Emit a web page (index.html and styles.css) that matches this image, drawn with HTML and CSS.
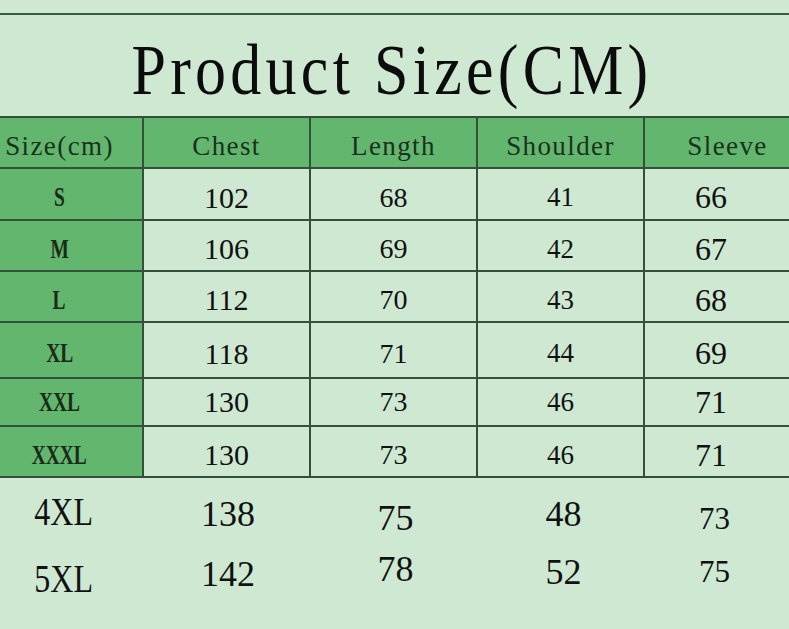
FILE: index.html
```html
<!DOCTYPE html>
<html lang="en">
<head>
<meta charset="utf-8">
<title>Product Size (CM)</title>
<link rel="stylesheet" href="styles.css">
</head>
<body>
<div class="page">
  <div class="topline"></div>
  <div class="title-wrap"><h1 class="title">Product Size(CM)</h1></div>
  <div class="grid">
    <div class="c h k"><span class="hl">Size(cm)</span></div>
    <div class="c h"><span class="hl">Chest</span></div>
    <div class="c h"><span class="hl">Length</span></div>
    <div class="c h"><span class="hl">Shoulder</span></div>
    <div class="c h"><span class="hl">Sleeve</span></div>

    <div class="c k"><span class="lab">S</span></div>
    <div class="c d chest">102</div>
    <div class="c d len">68</div>
    <div class="c d sh">41</div>
    <div class="c d sl">66</div>

    <div class="c k"><span class="lab">M</span></div>
    <div class="c d chest">106</div>
    <div class="c d len">69</div>
    <div class="c d sh">42</div>
    <div class="c d sl">67</div>

    <div class="c k"><span class="lab">L</span></div>
    <div class="c d chest">112</div>
    <div class="c d len">70</div>
    <div class="c d sh">43</div>
    <div class="c d sl">68</div>

    <div class="c k"><span class="lab">XL</span></div>
    <div class="c d chest">118</div>
    <div class="c d len">71</div>
    <div class="c d sh">44</div>
    <div class="c d sl">69</div>

    <div class="c k flat"><span class="lab">XXL</span></div>
    <div class="c d chest flat">130</div>
    <div class="c d len flat">73</div>
    <div class="c d sh flat">46</div>
    <div class="c d sl flat">71</div>

    <div class="c k"><span class="lab">XXXL</span></div>
    <div class="c d chest">130</div>
    <div class="c d len">73</div>
    <div class="c d sh">46</div>
    <div class="c d sl">71</div>

    <div class="f key u3"><span class="big">4XL</span></div>
    <div class="f chest-b">138</div>
    <div class="f len-b d4">75</div>
    <div class="f sh-b">48</div>
    <div class="f sl-b d5">73</div>

    <div class="f key d6"><span class="big">5XL</span></div>
    <div class="f chest-b d1">142</div>
    <div class="f len-b u3">78</div>
    <div class="f sh-b">52</div>
    <div class="f sl-b">75</div>
  </div>
</div>
</body>
</html>
```

FILE: styles.css
```css
html, body {
  margin: 0;
  padding: 0;
}
body {
  background: #cfe8d1;
  overflow: hidden;
  width: 789px;
  height: 629px;
  font-family: "Liberation Serif", "Times New Roman", serif;
  color: #111;
}
.page {
  width: 835px;
  margin-left: -23px;
}
.topline {
  margin-top: 13px;
  border-top: 2px solid #3a5a3f;
}
.title-wrap {
  height: 101px;
  box-sizing: border-box;
  padding-top: 19px;
  padding-right: 6px;
  display: flex;
  justify-content: center;
}
.title {
  margin: 0;
  font-weight: normal;
  font-size: 72px;
  line-height: 72px;
  letter-spacing: 5px;
  display: inline-block;
  transform: scaleX(0.86);
  color: #0c0c0c;
  white-space: nowrap;
}
.grid {
  display: grid;
  grid-template-columns: repeat(5, 167px);
  grid-template-rows: 51px 52px 51px 51px 56px 48px 51px 72px 44px;
  border-top: 2px solid #34503a;
}
.c {
  box-sizing: border-box;
  border-right: 2px solid #34503a;
  border-bottom: 2px solid #34503a;
  display: flex;
  align-items: center;
  justify-content: center;
  padding-top: 7px;
}
.c.flat {
  padding-top: 0;
}
.h {
  background: #62b66d;
}
.k {
  background: #62b66d;
}
.d {
  background: #cfe8d1;
}
.hl {
  font-size: 27px;
  letter-spacing: 1.4px;
  color: #1a311d;
}
.lab {
  display: inline-block;
  font-size: 27px;
  font-weight: bold;
  transform: scaleX(0.72);
  color: #1a2a1b;
}
.chest { font-size: 30px; }
.len { font-size: 28px; }
.sh { font-size: 27px; }
.sl {
  font-size: 32px;
  padding-right: 33px;
}
.f {
  display: flex;
  align-items: center;
  justify-content: center;
  box-sizing: border-box;
}
.key {
  padding-left: 6px;
}
.big {
  display: inline-block;
  font-size: 40px;
  transform: scaleX(0.8);
}
.chest-b { font-size: 36px; padding-left: 1px; }
.len-b { font-size: 36px; padding-left: 2px; }
.sh-b { font-size: 36px; padding-left: 4px; }
.sl-b { font-size: 31px; padding-right: 28px; }
.u3 { padding-bottom: 6px; }
.d1 { padding-top: 3px; }
.d4 { padding-top: 7px; }
.d5 { padding-top: 9px; }
.d6 { padding-top: 12px; }
```
